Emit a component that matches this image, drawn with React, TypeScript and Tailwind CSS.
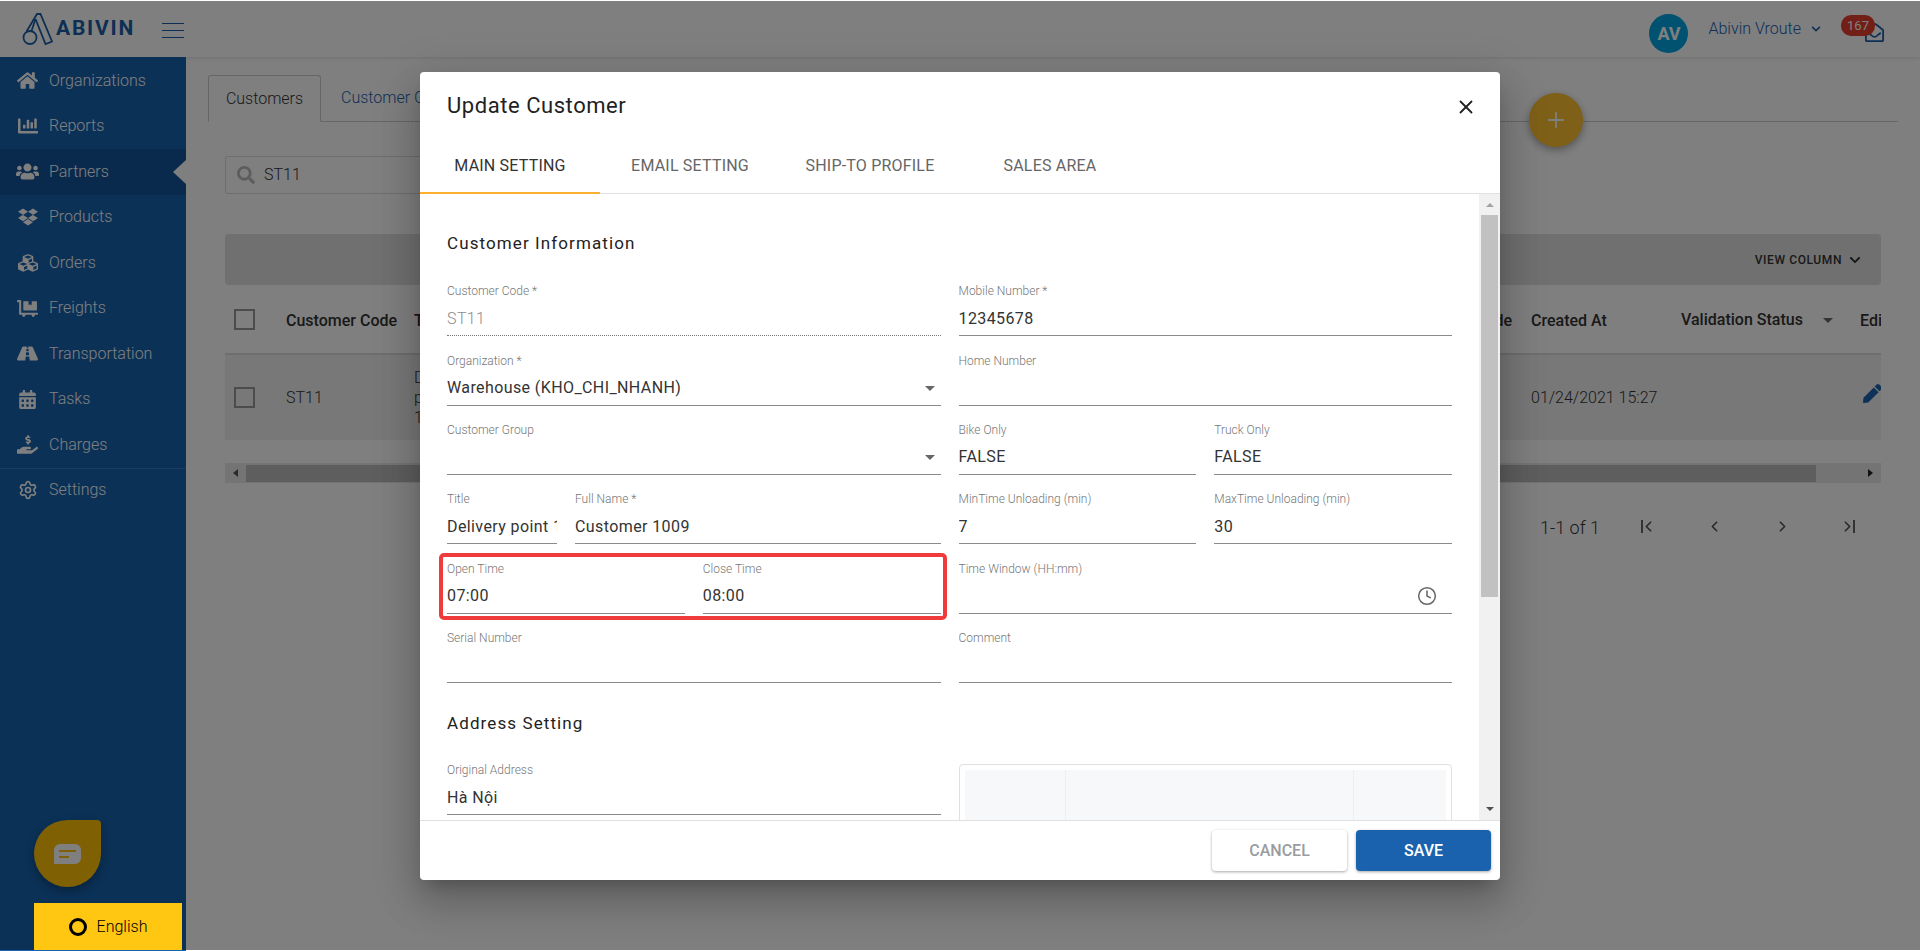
import React from "react";
import {
  FaHome, FaChartBar, FaUsers, FaDropbox, FaCubes, FaDollyFlatbed, FaRoad, FaCalendarAlt,
  FaHandHoldingUsd, FaSearch, FaChevronDown, FaRegEnvelopeOpen, FaPen,
} from "react-icons/fa";
import { Settings, X, Clock, ChevronLeft, ChevronRight, Plus } from "lucide-react";

const nav = [
  { label: "Organizations", icon: <FaHome size={21} /> },
  { label: "Reports", icon: <FaChartBar size={20} /> },
  { label: "Partners", icon: <FaUsers size={23} />, active: true },
  { label: "Products", icon: <FaDropbox size={20} /> },
  { label: "Orders", icon: <FaCubes size={20} /> },
  { label: "Freights", icon: <FaDollyFlatbed size={21} /> },
  { label: "Transportation", icon: <FaRoad size={21} /> },
  { label: "Tasks", icon: <FaCalendarAlt size={19} /> },
  { label: "Charges", icon: <FaHandHoldingUsd size={21} /> },
];

function NavItem({ label, icon, active }: { label: string; icon: React.ReactNode; active?: boolean }) {
  return (
    <div className={`relative h-[45.5px] flex items-center text-white ${active ? "bg-[#14549a]" : ""}`}>
      <span className="w-[49px] flex justify-center pl-[8px] pr-[2px] shrink-0">{icon}</span>
      <span className="text-[16px] font-light">{label}</span>
      {active && (
        <span className="absolute right-0 top-[11px] w-0 h-0 border-y-[12px] border-y-transparent border-r-[13px] border-r-white" />
      )}
    </div>
  );
}

function Caret({ className = "" }: { className?: string }) {
  return <span className={`w-0 h-0 border-x-[5px] border-x-transparent border-t-[5px] border-t-[#666] ${className}`} />;
}

function Field({
  label, value, disabled, select, clock, className = "",
}: {
  label: string; value?: string; disabled?: boolean; select?: boolean; clock?: boolean; className?: string;
}) {
  return (
    <div className={`h-[69.33px] flex flex-col justify-end min-w-0 ${className}`}>
      <div className="text-[12px] leading-[14px] mb-[2px] font-light text-[#777] truncate">{label}</div>
      <div
        className={`h-[36px] flex items-center justify-between border-b text-[16px] tracking-[0.4px] whitespace-nowrap overflow-hidden pt-[2px] ${
          disabled ? "border-dotted border-[#777] text-[#8c8c8c] font-light" : "border-[#8a8a8a] text-[#333]"
        }`}
      >
        <span>{value}</span>
        {select && <Caret className="mr-[6px]" />}
        {clock && <Clock size={20} strokeWidth={1.8} className="mr-[15px] text-[#666]" />}
      </div>
    </div>
  );
}

function SectionTitle({ children, className = "" }: { children: React.ReactNode; className?: string }) {
  return <div className={`text-[17px] text-[#222] tracking-[1.1px] leading-[20px] ${className}`}>{children}</div>;
}

function Logo() {
  return (
    <svg width="32" height="34" viewBox="0 0 32 34" fill="none" stroke="#1c5fa8" strokeWidth="1.8" className="shrink-0">
      <circle cx="8" cy="24.5" r="6.5" />
      <path d="M4.5 18.5 L15 1 L18.5 1 L30 28.5 L23.5 31 L13.5 6" />
      <path d="M13.5 6 L9.5 18" />
    </svg>
  );
}

export default function App() {
  return (
    <div className="relative w-[1920px] h-[951px] overflow-hidden bg-white font-['Roboto',sans-serif] text-[#333]">
      {/* header */}
      <header className="h-[57px] flex items-center justify-between bg-white shadow-[0_1px_4px_rgba(0,0,0,0.12)] relative">
        <div className="flex items-center">
          <div className="ml-[22px] mt-[2px]"><Logo /></div>
          <span className="ml-[2px] text-[21px] font-bold tracking-[1.8px] text-[#1c5fa8]">ABIVIN</span>
          <div className="ml-[27px] w-[22px] flex flex-col gap-[6px] mt-[4px]">
            <span className="h-px bg-[#1c5fa8]" /><span className="h-px bg-[#1c5fa8]" /><span className="h-px bg-[#1c5fa8]" />
          </div>
        </div>
        <div className="flex items-center pr-[36px]">
          <div className="w-[39px] h-[39px] rounded-full bg-[#00a4e0] text-white font-bold text-[18px] flex items-center justify-center mr-[20px] mt-[9px]">AV</div>
          <span className="text-[16px] font-light text-[#2060b0] mt-[1px]">Abivin Vroute</span>
          <FaChevronDown size={10} className="ml-[10px] text-[#1c5fa8]" />
          <div className="relative ml-[44px] mt-[8px]">
            <FaRegEnvelopeOpen size={19} className="text-[#1c5fa8]" />
            <span className="absolute -left-[24px] -top-[8px] w-[34px] h-[21px] rounded-[10px] bg-[#e53e30] text-white text-[13px] flex items-center justify-center">167</span>
          </div>
        </div>
      </header>

      <div className="flex h-[894px]">
        {/* sidebar */}
        <aside className="w-[186px] shrink-0 bg-[#1662ae] relative pt-px">
          {nav.map((n) => <NavItem key={n.label} {...n} />)}
          <div className="h-px bg-white/15" />
          <div className="-mt-px"><NavItem label="Settings" icon={<Settings size={20} />} /></div>
          <div className="absolute left-[34px] bottom-[64px] w-[67px] h-[67px] bg-[#ffc107] rounded-[50%_4px_50%_50%] shadow-[0_4px_10px_rgba(0,0,0,0.3)] flex items-center justify-center">
            <div className="w-[27px] h-[20px] bg-white rounded-[6px_6px_6px_1px] flex flex-col justify-center gap-[4px] pl-[5px]">
              <span className="w-[17px] h-[2px] bg-[#ffc107]" />
              <span className="w-[10px] h-[2px] bg-[#ffc107]" />
            </div>
          </div>
        </aside>

        {/* main */}
        <main className="flex-1 min-w-0">
          <div className="pt-[18px] pl-[22px] pr-[22px]">
            <div className="flex h-[47px] border-b border-[#ccc] text-[16px] font-light">
              <div className="w-[113px] h-[47px] border border-b-white border-[#ccc] rounded-t-[3px] flex items-center justify-center bg-white">Customers</div>
              <div className="pl-[20px] flex items-center text-[#1c62ae]">Customer Groups</div>
            </div>
          </div>
          <div className="px-[39px]">
            <div className="mt-[34px] h-[38px] w-[600px] border border-[#ddd] rounded-[2px] flex items-center pl-[11px] text-[16px]">
              <FaSearch size={18} className="text-[#bbb]" />
              <span className="ml-[9px] font-light">ST11</span>
            </div>
            <div className="mt-[40px] h-[51px] bg-[#e0e0e0] rounded-[4px] flex items-center justify-end pr-[20px]">
              <span className="text-[12px] font-medium tracking-[0.6px]">VIEW COLUMN</span>
              <FaChevronDown size={12} className="ml-[7px]" />
            </div>
            <div className="h-[70px] flex items-center border-b-2 border-[#ddd] text-[16px] font-medium overflow-hidden whitespace-nowrap pt-[4px]">
              <div className="w-[61px] shrink-0 pl-[9px] -mt-[4px]"><div className="w-[21px] h-[21px] border-2 border-[#999]" /></div>
              <div className="w-[128px] shrink-0">Customer Code</div>
              <div className="w-[1079px] shrink-0">Title</div>
              <div className="w-[19px] shrink-0 flex justify-end">Code</div>
              <div className="w-[19px] shrink-0" />
              <div className="w-[150px] shrink-0">Created At</div>
              <div className="w-[179px] shrink-0 flex items-center -mt-[2px]">Validation Status <Caret className="ml-[20px]" /></div>
              <div className="w-[40px] shrink-0">Edit</div>
            </div>
            <div className="h-[85px] flex items-center bg-[#f0f0f0] text-[16px] font-light overflow-hidden">
              <div className="w-[61px] shrink-0 pl-[9px]"><div className="w-[21px] h-[21px] border-2 border-[#999]" /></div>
              <div className="w-[128px] shrink-0">ST11</div>
              <div className="w-[1117px] shrink-0 leading-[20px]">D<br />p<br />1</div>
              <div className="w-[19px] shrink-0" />
              <div className="w-[179px] shrink-0 -ml-[19px] text-[16px]">01/24/2021 15:27</div>
              <div className="w-[150px] shrink-0" />
              <div className="w-[24px] shrink-0 pl-[3px]"><FaPen size={19} className="text-[#1c62ae] -mt-[8px]" /></div>
            </div>
            <div className="mt-[23px] h-[20px] bg-[#e8e8e8] flex items-center">
              <span className="w-[21px] flex justify-center"><span className="w-0 h-0 border-y-[4px] border-y-transparent border-r-[5px] border-r-[#555]" /></span>
              <span className="w-[1570px] h-[17px] bg-[#bdbdbd]" />
              <span className="flex-1 flex justify-end pr-[8px]"><span className="w-0 h-0 border-y-[4px] border-y-transparent border-l-[5px] border-l-[#222]" /></span>
            </div>
            <div className="mt-[33px] h-[20px] flex items-center justify-end text-[#555] pr-[26px]">
              <span className="text-[18px] font-light text-[#333] mr-[40px] mt-[2px]">1-1 of 1</span>
              <span className="w-[18px] flex items-center justify-center relative"><span className="w-[2px] h-[13px] bg-[#666] mr-[-3px]" /><ChevronLeft size={17} strokeWidth={2.4} /></span>
              <span className="w-[68px] flex justify-center ml-[22px]"><ChevronLeft size={17} strokeWidth={2.4} /></span>
              <span className="w-[68px] flex justify-center"><ChevronRight size={17} strokeWidth={2.4} /></span>
              <span className="w-[39px] flex items-center justify-end"><ChevronRight size={17} strokeWidth={2.4} className="-mr-[3px]" /><span className="w-[2px] h-[13px] bg-[#666]" /></span>
            </div>
          </div>
        </main>
      </div>

      {/* floating add button */}
      <div className="absolute left-[1529px] top-[93px] w-[54px] h-[54px] rounded-full bg-[#ffc030] shadow-[0_3px_8px_rgba(0,0,0,0.35)] flex items-center justify-center text-white">
        <Plus size={24} strokeWidth={1.8} />
      </div>

      {/* backdrop */}
      <div className="absolute inset-x-0 top-px bottom-px bg-black/50" />

      {/* language */}
      <div className="absolute left-[34px] top-[903px] w-[148px] h-[47px] bg-[#ffc612] flex items-center justify-center text-[16px] font-light text-black">
        <span className="w-[18px] h-[18px] rounded-full border-[3px] border-black mr-[10px]" />
        English
      </div>

      {/* dialog */}
      <div className="absolute left-[420px] top-[72px] w-[1080px] h-[808px] bg-white rounded-[4px] flex flex-col overflow-hidden shadow-[0_11px_15px_-7px_rgba(0,0,0,0.2),0_24px_38px_3px_rgba(0,0,0,0.14),0_9px_46px_8px_rgba(0,0,0,0.12)]">
        <div className="h-[65px] shrink-0 flex items-center justify-between pl-[27px] pr-[22px] pt-[2px]">
          <span className="text-[22px] text-[#222] tracking-[0.55px]">Update Customer</span>
          <X size={22} strokeWidth={2} className="text-[#222] mr-[1px] mt-[2px]" />
        </div>
        <div className="h-[57px] shrink-0 flex border-b border-[#e0e0e0] text-[16px] text-[#666] tracking-[0.2px]">
          <div className="w-[180px] h-[57px] flex items-center justify-center border-b-2 border-[#ffb02e] text-[#333] pt-[2px]">MAIN SETTING</div>
          <div className="w-[180px] flex items-center justify-center pt-[2px]">EMAIL SETTING</div>
          <div className="w-[180px] flex items-center justify-center pt-[2px]">SHIP-TO PROFILE</div>
          <div className="w-[180px] flex items-center justify-center pt-[2px]">SALES AREA</div>
        </div>
        <div className="flex-1 min-h-0 flex">
          <div className="flex-1 min-w-0 overflow-hidden px-[27px] pt-[39px]">
            <SectionTitle>Customer Information</SectionTitle>
            <div className="grid grid-cols-2 gap-x-[18px] mt-[14px]">
              <div>
                <Field label="Customer Code *" value="ST11" disabled />
                <Field label="Organization *" value="Warehouse (KHO_CHI_NHANH)" select />
                <Field label="Customer Group" select />
                <div className="flex gap-[18px]">
                  <Field label="Title" value="Delivery point 1009" className="w-[110px] shrink-0" />
                  <Field label="Full Name *" value="Customer 1009" className="flex-1" />
                </div>
                <div className="relative flex gap-[18px]">
                  <Field label="Open Time" value="07:00" className="flex-1" />
                  <Field label="Close Time" value="08:00" className="flex-1" />
                  <div className="absolute -left-[8px] -right-[6px] top-[9px] h-[67px] border-[4px] border-[#ef3b3b] rounded-[5px]" />
                </div>
                <Field label="Serial Number" />
              </div>
              <div>
                <Field label="Mobile Number *" value="12345678" />
                <Field label="Home Number" />
                <div className="flex gap-[18px]">
                  <Field label="Bike Only" value="FALSE" className="flex-1" />
                  <Field label="Truck Only" value="FALSE" className="flex-1" />
                </div>
                <div className="flex gap-[18px]">
                  <Field label="MinTime Unloading (min)" value="7" className="flex-1" />
                  <Field label="MaxTime Unloading (min)" value="30" className="flex-1" />
                </div>
                <Field label="Time Window (HH:mm)" clock />
                <Field label="Comment" />
              </div>
            </div>
            <SectionTitle className="mt-[30px]">Address Setting</SectionTitle>
            <div className="grid grid-cols-2 gap-x-[18px] mt-[13px]">
              <Field label="Original Address" value="Hà Nội" />
              <div className="h-[100px] mt-[18px] border border-[#e0e0e0] rounded-[4px] p-[5px]">
                <div className="h-full bg-[#f7f8fa] flex">
                  <div className="w-[101px] border-r border-[#eceef0]" />
                  <div className="w-[288px] border-r border-[#eceef0]" />
                </div>
              </div>
            </div>
          </div>
          <div className="w-[21px] shrink-0 bg-[#f1f1f1] flex flex-col items-start pl-[2px] pr-[2px]">
            <div className="h-[21px] w-[17px] flex items-center justify-center"><span className="w-0 h-0 border-x-[4px] border-x-transparent border-b-[4px] border-b-[#a3a3a3]" /></div>
            <div className="h-[382px] w-[17px] bg-[#c1c1c1]" />
            <div className="flex-1 w-[17px] flex items-end justify-center pb-[9px]"><span className="w-0 h-0 border-x-[4px] border-x-transparent border-t-[4px] border-t-[#505050]" /></div>
          </div>
        </div>
        <div className="h-[60px] shrink-0 flex items-start justify-end gap-[9px] pr-[9px] pt-[9px] border-t border-[#e0e0e0] text-[16px] font-medium">
          <div className="w-[135px] h-[41px] rounded-[4px] bg-white text-[#9a9da0] flex items-center justify-center shadow-[0_1px_3px_rgba(0,0,0,0.35)]">CANCEL</div>
          <div className="w-[135px] h-[41px] rounded-[4px] bg-[#1a62ae] text-white flex items-center justify-center shadow-[0_1px_3px_rgba(0,0,0,0.35)]">SAVE</div>
        </div>
      </div>
    </div>
  );
}
